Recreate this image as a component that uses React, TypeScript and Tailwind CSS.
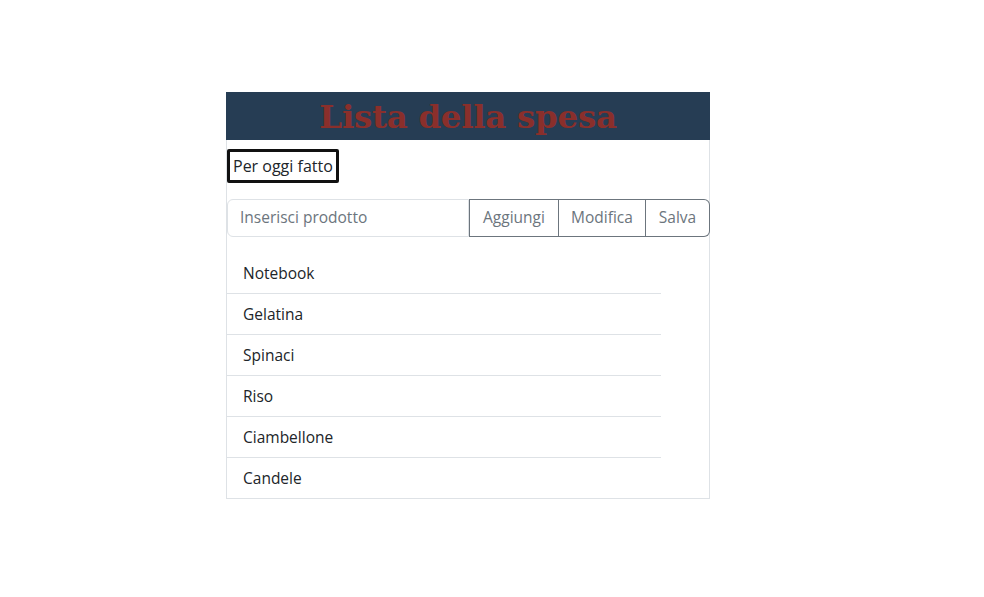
const prodotti = ['Notebook', 'Gelatina', 'Spinaci', 'Riso', 'Ciambellone', 'Candele'];

export default function App() {
  return (
    <div className="min-h-screen bg-white font-['Open_Sans',sans-serif] text-[#212529]">
      <div className="ml-[226px] pt-[92px] w-[484px]">
        <div className="border border-t-0 border-[#dee2e6]">
          <header className="h-12 bg-[#263d54] flex items-center justify-center -mx-px">
            <h1 className="font-['DejaVu_Serif',serif] font-bold text-[32.5px] leading-none text-[#8a2f2b] tracking-[-0.3px] mt-[2px]">
              Lista della spesa
            </h1>
          </header>
          <div className="mt-[9px]">
            <span className="inline-block border-[3px] border-[#111] rounded-[2px] px-[3px] py-[2px] text-[16px] leading-6">
              Per oggi fatto
            </span>
          </div>
          <div className="mt-4 flex h-[38px] text-[15.5px] leading-6">
            <input
              className="flex-1 min-w-0 border border-[#dee2e6] rounded-l-md px-3 pb-[2px] text-[#212529] placeholder:text-[#6c757d] outline-none"
              placeholder="Inserisci prodotto"
            />
            <button className="w-[90px] border border-[#6c757d] text-[#6c757d] pb-[2px]">Aggiungi</button>
            <button className="w-[87px] border border-l-0 border-[#6c757d] text-[#6c757d] pb-[2px]">Modifica</button>
            <button className="w-[64px] border border-l-0 border-[#6c757d] rounded-r-md text-[#6c757d] -mr-px pb-[2px]">Salva</button>
          </div>
          <ul className="mt-4 w-[434px] text-[15.5px]">
            {prodotti.map((p, i) => (
              <li
                key={p}
                className={`px-4 py-2 leading-6 ${i < prodotti.length - 1 ? 'border-b border-[#dee2e6]' : ''}`}
              >
                {p}
              </li>
            ))}
          </ul>
        </div>
      </div>
    </div>
  );
}
